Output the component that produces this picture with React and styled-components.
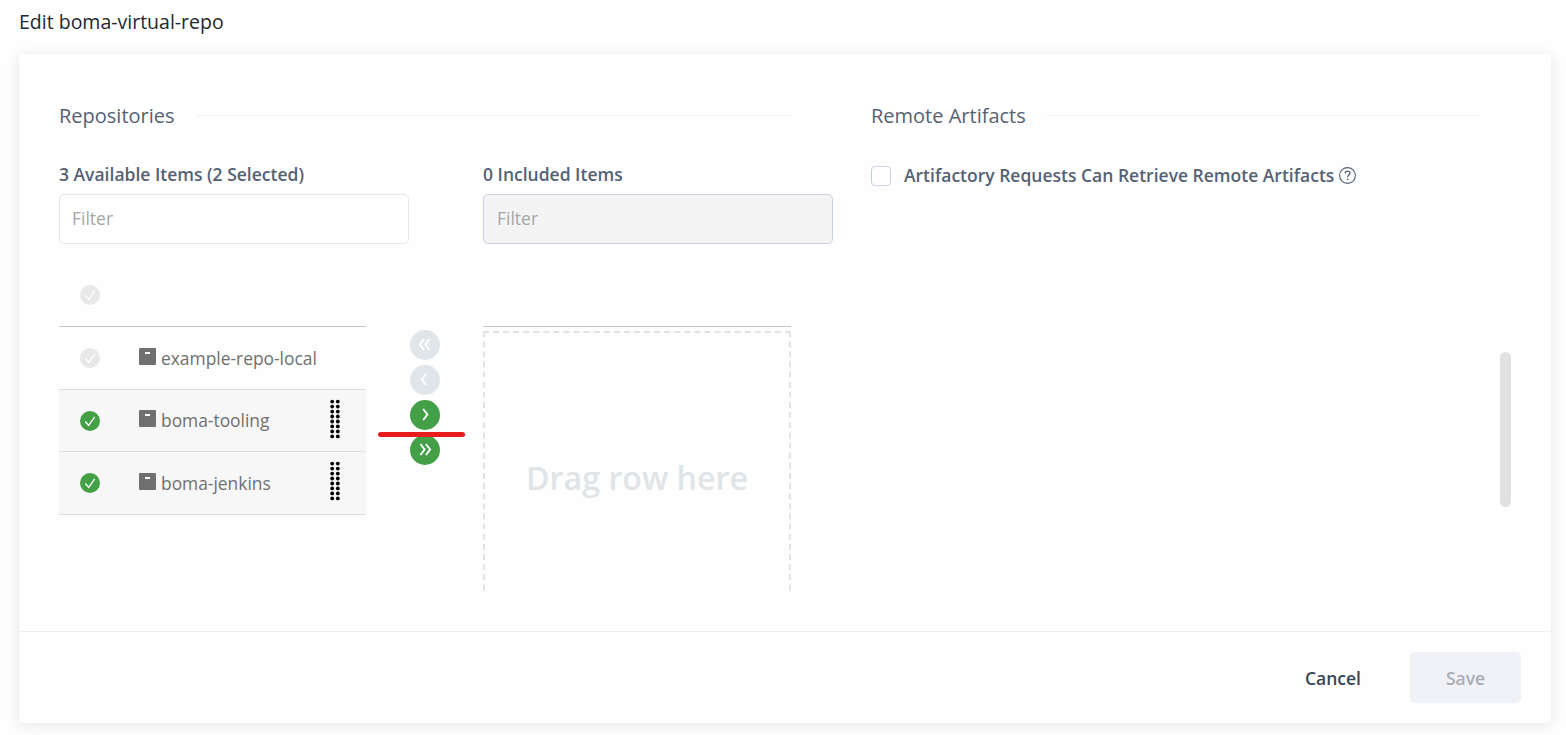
import React from 'react';
import styled, { createGlobalStyle } from 'styled-components';

const GlobalStyle = createGlobalStyle`
  * { box-sizing: border-box; }
  body {
    margin: 0;
    background: #fefefe;
    font-family: "Open Sans", "Noto Sans", sans-serif;
    overflow: hidden;
  }
  input, button { font-family: inherit; }
`;

const Page = styled.div`
  height: 735px;
  padding: 0 15px 12px 19px;
  display: flex;
  flex-direction: column;
  overflow: hidden;
`;

const Title = styled.h1`
  margin: 0;
  height: 54px;
  flex: none;
  padding-top: 8px;
  font-size: 19.5px;
  line-height: 27px;
  font-weight: 400;
  color: #25282d;
`;

const Card = styled.main`
  flex: 1;
  display: flex;
  flex-direction: column;
  background: #fefefe;
  border-radius: 4px;
  box-shadow: 0 2px 14px rgba(0, 0, 0, 0.1);
`;

const Body = styled.div`
  height: 577px;
  padding: 46px 40px 40px;
  display: flex;
  overflow: hidden;
`;

const Section = styled.section`
  width: ${(p) => p.$width}px;
  flex: none;
  margin-right: ${(p) => p.$after}px;
`;

const Heading = styled.h2`
  margin: 0;
  height: 32px;
  display: flex;
  align-items: center;
  gap: 20px;
  font-size: 20px;
  line-height: 32px;
  font-weight: 400;
  color: #556274;
  white-space: nowrap;
  &::after {
    content: '';
    flex: 1;
    height: 1px;
    margin-bottom: 1px;
    background: #f3f3f3;
  }
`;

const Transfer = styled.div`
  display: flex;
  padding-top: 30px;
`;

const Column = styled.div`
  width: ${(p) => p.$width}px;
  flex: none;
`;

const Label = styled.div`
  height: 32px;
  font-size: 17.5px;
  line-height: 25px;
  font-weight: 600;
  color: #556274;
  white-space: nowrap;
`;

const FilterInput = styled.input`
  display: block;
  width: 350px;
  height: 50px;
  padding: 0 13px 2px 12px;
  border: 1px solid #e6e6e6;
  border-radius: 5px;
  background: #fff;
  font-size: 17.5px;
  &::placeholder { color: #a6a6a6; opacity: 1; }
  &:disabled { padding-left: 13px; background: #f4f4f4; border-color: #c8d0e4; }
`;

const HeadRow = styled.div`
  height: 83px;
  padding: 20px 0 0 21px;
  display: flex;
  align-items: center;
  border-bottom: 1px solid #c6c6c6;
`;

const Row = styled.div`
  height: ${(p) => p.$height}px;
  padding: 0 26px 0 21px;
  display: flex;
  align-items: center;
  border-bottom: 1px solid #dcdcdc;
  background: ${(p) => (p.$selected ? '#f7f7f7' : 'transparent')};
`;

const RowName = styled.span`
  flex: 1;
  margin: 0 0 1px 5px;
  font-size: 17.4px;
  line-height: 24px;
  color: #707070;
`;

const RepoGlyph = styled.svg`
  flex: none;
  margin: 0 0 4px 39px;
`;

const Handle = styled.svg`
  margin-bottom: 4px;
`;

const Controls = styled.div`
  width: 117px;
  padding: 168px 0 0 44px;
  display: flex;
  flex-direction: column;
  gap: 5px;
  position: relative;
`;

const MoveButton = styled.button`
  width: 30px;
  height: 30px;
  padding: 0;
  display: block;
  border: 0;
  border-radius: 50%;
  background: ${(p) => (p.disabled ? '#dfe5e8' : '#43a047')};
  svg { display: block; }
`;

const Marker = styled.div`
  position: absolute;
  left: 12px;
  top: 270px;
  width: 87px;
  height: 5px;
  border-radius: 3px;
  background: #e81c1c;
`;

const DropClip = styled.div`
  height: 264px;
  padding-top: 4px;
  overflow: hidden;
`;

const DropZone = styled.div`
  height: 300px;
  padding-bottom: 7px;
  border: 2px dashed #e2e3e5;
  display: flex;
  justify-content: center;
  align-items: center;
  font-size: 32.2px;
  font-weight: 600;
  color: #e1e4e7;
  white-space: nowrap;
`;

const CheckLine = styled.label`
  display: flex;
  align-items: center;
  height: 26px;
  margin-top: 31px;
  font-size: 17.5px;
  font-weight: 600;
  color: #556274;
  white-space: nowrap;
`;

const CheckText = styled.span`
  margin-bottom: 2px;
`;

const Checkbox = styled.input`
  appearance: none;
  width: 20px;
  height: 20px;
  margin: 0 13px 0 0;
  border: 1px solid #c8d0e8;
  border-radius: 4px;
  background: #fff;
`;

const HelpGlyph = styled.svg`
  margin: 0 0 2px 5px;
`;

const ScrollThumb = styled.div`
  width: 11px;
  height: 155px;
  margin-top: 252px;
  border-radius: 6px;
  background: #e1e1e1;
`;

const Footer = styled.footer`
  flex: 1;
  display: flex;
  align-items: center;
  justify-content: flex-end;
  padding-right: 30px;
  border-top: 1px solid #f0f0f2;
`;

const FooterButton = styled.button`
  height: 51px;
  padding: 0;
  border: 0;
  border-radius: 5px;
  font-size: 17.5px;
  font-weight: 600;
  width: ${(p) => (p.$primary ? 111 : 154)}px;
  background: ${(p) => (p.$primary ? '#f0f2f7' : 'transparent')};
  color: ${(p) => (p.$primary ? '#a9adb4' : '#3a4656')};
`;

const CheckGlyph = styled.svg`
  flex: none;
`;

function Check({ on }) {
  return (
    <CheckGlyph width="20" height="20" viewBox="0 0 20 20">
      <circle cx="10" cy="10" r="10" fill={on ? '#43a047' : '#e8e8e8'} />
      <path d="M5.3 10.5 8.7 14.4 14.7 5.9" fill="none" stroke="#fff" strokeWidth="1.3" />
    </CheckGlyph>
  );
}

function RepoIcon() {
  return (
    <RepoGlyph width="17" height="17" viewBox="0 0 17 17">
      <rect width="17" height="17" rx="1" fill="#707070" />
      <rect x="6" y="4" width="5" height="2" fill="#fff" />
    </RepoGlyph>
  );
}

function DragHandle() {
  return (
    <Handle width="10" height="40" viewBox="0 0 10 40">
      {Array.from({ length: 8 }, (_, i) => (
        <g key={i}>
          <circle cx="2.2" cy={2.6 + i * 4.97} r="1.9" />
          <circle cx="7.8" cy={2.6 + i * 4.97} r="1.9" />
        </g>
      ))}
    </Handle>
  );
}

const arrows = {
  first: 'M14 9 9.8 14.5 14 20M19.5 9 15.3 14.5 19.5 20',
  left: 'M16 9 11.8 14.5 16 20',
  right: 'M13.2 9 17.4 14.5 13.2 20',
  last: 'M10.4 9 14.6 14.5 10.4 20M15.9 9 20.1 14.5 15.9 20',
};

function Move({ dir, disabled }) {
  return (
    <MoveButton disabled={disabled} aria-label={dir}>
      <svg width="30" height="30" viewBox="0 0 30 30">
        <path d={arrows[dir]} fill="none" stroke="#fff" strokeWidth="1.9" />
      </svg>
    </MoveButton>
  );
}

const repos = [
  { name: 'example-repo-local', selected: false, height: 63 },
  { name: 'boma-tooling', selected: true, height: 62 },
  { name: 'boma-jenkins', selected: true, height: 63 },
];

export default function App() {
  return (
    <Page>
      <GlobalStyle />
      <Title>Edit boma-virtual-repo</Title>
      <Card>
        <Body>
          <Section $width={732} $after={80}>
            <Heading>Repositories</Heading>
            <Transfer>
              <Column $width={307}>
                <Label>3 Available Items (2 Selected)</Label>
                <FilterInput placeholder="Filter" />
                <HeadRow><Check /></HeadRow>
                {repos.map((r) => (
                  <Row key={r.name} $selected={r.selected} $height={r.height}>
                    <Check on={r.selected} />
                    <RepoIcon />
                    <RowName>{r.name}</RowName>
                    {r.selected && <DragHandle />}
                  </Row>
                ))}
              </Column>
              <Controls>
                <Move dir="first" disabled />
                <Move dir="left" disabled />
                <Move dir="right" />
                <Move dir="last" />
                <Marker />
              </Controls>
              <Column $width={308}>
                <Label>0 Included Items</Label>
                <FilterInput placeholder="Filter" disabled />
                <HeadRow />
                <DropClip>
                  <DropZone>Drag row here</DropZone>
                </DropClip>
              </Column>
            </Transfer>
          </Section>
          <Section $width={609} $after={20}>
            <Heading>Remote Artifacts</Heading>
            <CheckLine>
              <Checkbox type="checkbox" />
              <CheckText>Artifactory Requests Can Retrieve Remote Artifacts</CheckText>
              <HelpGlyph width="17" height="17" viewBox="0 0 17 17" fill="none" stroke="#556274">
                <circle cx="8.5" cy="8.5" r="7.9" strokeWidth="1.1" />
                <path d="M6.2 6.5C6.2 5 7.1 4.2 8.5 4.2S10.9 5 10.9 6.3C10.9 8 8.6 8 8.6 10.2" strokeWidth="1.3" />
                <path d="M8.6 11.6V13.1" strokeWidth="1.5" />
              </HelpGlyph>
            </CheckLine>
          </Section>
          <ScrollThumb />
        </Body>
        <Footer>
          <FooterButton>Cancel</FooterButton>
          <FooterButton $primary>Save</FooterButton>
        </Footer>
      </Card>
    </Page>
  );
}
